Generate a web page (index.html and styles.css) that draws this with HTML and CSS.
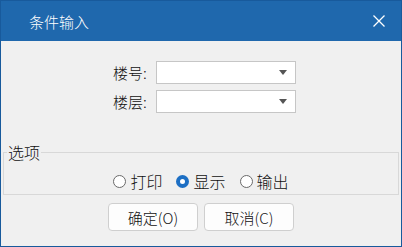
FILE: index.html
```html
<!DOCTYPE html>
<html>

<head>
  <meta charset="utf-8">
  <title>条件输入</title>
  <link rel="stylesheet" href="styles.css">
</head>

<body>
  <div class="dialog">
    <!-- title bar -->
    <div class="titlebar">
      <span class="title">条件输入</span>
      <svg class="close" width="12" height="12" viewBox="0 0 12 12">
        <path d="M0.5 0.5 L11.5 11.5 M11.5 0.5 L0.5 11.5" stroke="#fff" stroke-width="1.3" fill="none"/>
      </svg>
    </div>

    <div class="content">
      <div class="fields">
        <div class="row">
          <span class="label">楼号:</span>
          <div class="combo"><span class="arrow"></span></div>
        </div>
        <div class="row">
          <span class="label">楼层:</span>
          <div class="combo"><span class="arrow"></span></div>
        </div>
      </div>

      <fieldset class="group">
        <legend>选项</legend>
        <div class="options">
          <label class="opt"><span class="radio"></span>打印</label>
          <label class="opt"><span class="radio checked"></span>显示</label>
          <label class="opt"><span class="radio"></span>输出</label>
        </div>
      </fieldset>

      <div class="buttons">
        <button class="btn" type="button">确定(O)</button>
        <button class="btn" type="button">取消(C)</button>
      </div>
    </div>
  </div>
</body>

</html>
```
FILE: styles.css
```css
html, body {
  margin: 0;
  padding: 0;
}

body {
  font-family: "Noto Sans CJK SC", "Liberation Sans", sans-serif;
  font-size: 15px;
  font-weight: 300;
  color: #111;
}

/* Window frame */
.dialog {
  width: 402px;
  height: 247px;
  box-sizing: border-box;
  border: 1px solid #185a9c;
  background: #f0f0f0;
  display: flex;
  flex-direction: column;
}

.titlebar {
  height: 40px;
  background: #1f68ad;
  color: white;
  display: flex;
  align-items: center;
  justify-content: space-between;
  padding: 0 16px 0 28px;
  flex-shrink: 0;
}

.title {
  font-size: 15px;
  line-height: 1;
}

.close {
  display: block;
}

.content {
  flex: 1;
  display: flex;
  flex-direction: column;
}

/* Combo rows */
.fields {
  padding: 20px 0 0 112px;
  display: flex;
  flex-direction: column;
  gap: 6px;
}

.row {
  display: flex;
  align-items: center;
}

.label {
  width: 43px;
  line-height: 1;
}

.combo {
  width: 140px;
  height: 23px;
  box-sizing: border-box;
  border: 1px solid #c6c6c6;
  background: #fff;
  display: flex;
  align-items: center;
  justify-content: flex-end;
  padding-right: 8px;
}

.arrow {
  width: 0;
  height: 0;
  border-left: 4px solid transparent;
  border-right: 4px solid transparent;
  border-top: 5px solid #555;
}

/* Group box */
.group {
  margin: 31px 2px 0 2px;
  padding: 0;
  height: 51px;
  box-sizing: border-box;
  border: 1px solid #d8d8d8;
}

.group legend {
  margin-left: 3px;
  padding: 0 1px;
  line-height: 16px;
  font-size: 16px;
}

.options {
  display: flex;
  justify-content: center;
  gap: 14px;
  padding: 12px 0 0 0;
  font-size: 16px;
  line-height: 18px;
}

.opt {
  display: flex;
  align-items: center;
  gap: 4px;
}

.radio {
  width: 13px;
  height: 13px;
  box-sizing: border-box;
  border: 1px solid #6a6a6a;
  border-radius: 50%;
  background: #fff;
}

.radio.checked {
  border: 4px solid #1d6fc4;
}

/* Buttons */
.buttons {
  display: flex;
  justify-content: center;
  gap: 6px;
  margin-top: 8px;
}

.btn {
  width: 90px;
  height: 28px;
  border: 1px solid #cfcfcf;
  border-radius: 4px;
  background: #fdfdfd;
  font-family: "Noto Sans CJK SC", "Liberation Sans", sans-serif;
  font-size: 15px;
  font-weight: 300;
  color: #111;
  padding: 0;
}
```
